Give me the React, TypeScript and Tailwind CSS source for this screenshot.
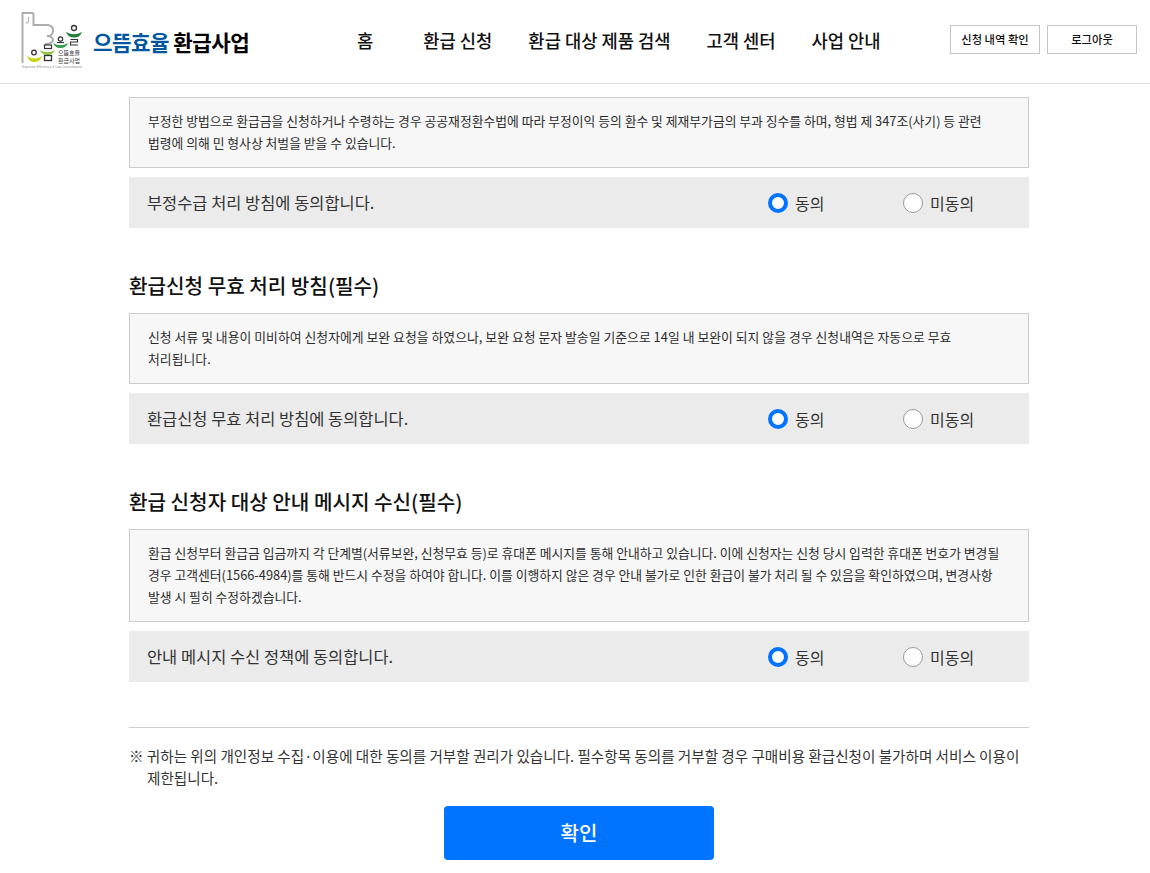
const font = { fontFamily: '"Noto Sans CJK KR", "Noto Sans", sans-serif' };

function Logo() {
  return (
    <svg width="64" height="70" viewBox="0 0 64 70" className="shrink-0">
      <path d="M2.5 57V7H12c1 0 1.5.5 1.5 1.5V19H27q6 0 6 5.5t-6 5.5q6 .5 6 4t-8 4" fill="none" stroke="#adadad" strokeWidth="2" />
      <path d="M8.5 11v4q0 2-3 2" fill="none" stroke="#bdbdbd" strokeWidth="1.2" />
      <path d="M7 50q7.500 5 15 0q-2 6-7.500 6T7 50z" fill="#c9d217" />
      <circle cx="14" cy="46.500" r="2.300" fill="none" stroke="#333" strokeWidth="1.300" />
      <path d="M20 44q7.500 4.500 15 0q-2 5-7.500 5T20 44z" fill="#8cc63f" />
      <rect x="24.500" y="49.500" width="7" height="5" fill="none" stroke="#333" strokeWidth="1.300" />
      <rect x="24.500" y="39" width="7" height="3.500" fill="none" stroke="#333" strokeWidth="1.200" />
      <path d="M33 37q7.500 4.500 15 0q-2 5-7.500 5T33 37z" fill="#2f9e44" />
      <circle cx="40.500" cy="33" r="2.200" fill="none" stroke="#333" strokeWidth="1.200" />
      <path d="M37 36.500h7" stroke="#333" strokeWidth="1.200" />
      <path d="M46 26q8 4.500 16 0q-2 5.500-8 5.500T46 26z" fill="#1d7f3a" />
      <circle cx="54" cy="22" r="2.500" fill="none" stroke="#333" strokeWidth="1.300" />
      <path d="M50.500 33.500h7v2.500h-7v3h7.500" fill="none" stroke="#333" strokeWidth="1.200" />
      <text x="38" y="49" fontSize="6" fill="#333" style={font}>으뜸효율</text>
      <text x="38" y="56.500" fontSize="6" fill="#333" style={font}>환급사업</text>
      <text x="2" y="62" fontSize="3" fill="#888" textLength="60" style={{ fontFamily: '"Liberation Sans", sans-serif' }}>Supreme Efficiency &amp; Low Consumption</text>
    </svg>
  );
}

function Radio({ checked, label }: { checked?: boolean; label: string }) {
  return (
    <div className="flex items-center gap-[7px]">
      {checked ? (
        <span className="w-[20px] h-[20px] rounded-full bg-white border-[4px] border-[#0073ff]" />
      ) : (
        <span className="w-[20px] h-[20px] rounded-full bg-white border border-[#999999]" />
      )}
      <span className="text-[16px] text-[#333333] leading-[24px]">{label}</span>
    </div>
  );
}

function AgreeRow({ label }: { label: string }) {
  return (
    <div className="h-[51px] mt-[9px] bg-[#ebebeb] flex items-center pl-[18px]">
      <span className="flex-1 text-[16.45px] text-[#333333]">{label}</span>
      <div className="w-[135px]"><Radio checked label="동의" /></div>
      <div className="w-[126px]"><Radio label="미동의" /></div>
    </div>
  );
}

function Notice({ lines, wide }: { lines: string[]; wide?: boolean }) {
  return (
    <div className={wide ? "border border-[#cccccc] bg-[#f7f7f7] px-[18px] pt-[12px] pb-[13px] text-[12.82px] tracking-[0.04px] leading-[22px] text-[#2c2c2c]" : "border border-[#cccccc] bg-[#f7f7f7] px-[18px] pt-[12px] pb-[13px] text-[12.82px] leading-[22px] text-[#2c2c2c]"}>
      {lines.map((l) => (
        <div key={l} className="whitespace-nowrap">{l}</div>
      ))}
    </div>
  );
}

export default function App() {
  return (
    <div className="w-[1150px] h-[873px] bg-white overflow-hidden" style={font}>
      <header className="h-[84px] border-b border-[#dddddd] flex items-center relative">
        <div className="ml-[20px] mt-[-1px]"><Logo /></div>
        <div className="ml-[9px] text-[21.2px] font-bold tracking-[-0.5px] whitespace-nowrap">
          <span className="text-[#00569f]">으뜸효율</span>
          <span className="text-black"> 환급사업</span>
        </div>
        <nav className="absolute left-[357px] top-[26px] flex gap-[36px] text-[17.7px] font-medium text-[#111111] leading-[28px]">
          <span className="mr-[14px]">홈</span>
          <span>환급 신청</span>
          <span>환급 대상 제품 검색</span>
          <span>고객 센터</span>
          <span>사업 안내</span>
        </nav>
        <div className="absolute left-[950px] top-[25px] flex gap-[7px] text-[11.3px] font-medium text-[#111111]">
          <div className="w-[90px] h-[29px] border border-[#c4c4c4] flex items-center justify-center">신청 내역 확인</div>
          <div className="w-[90px] h-[29px] border border-[#c4c4c4] flex items-center justify-center">로그아웃</div>
        </div>
      </header>

      <main className="w-[900px] ml-[129px] pt-[13px]">
        <Notice
          lines={[
            "부정한 방법으로 환급금을 신청하거나 수령하는 경우 공공재정환수법에 따라 부정이익 등의 환수 및 제재부가금의 부과 징수를 하며, 형법 제 347조(사기) 등 관련",
            "법령에 의해 민 형사상 처벌을 받을 수 있습니다.",
          ]}
        />
        <AgreeRow label="부정수급 처리 방침에 동의합니다." />

        <h2 className="mt-[42px] mb-[11px] text-[20.15px] font-medium leading-[32px] text-[#111111]">환급신청 무효 처리 방침(필수)</h2>
        <Notice
          wide
          lines={[
            "신청 서류 및 내용이 미비하여 신청자에게 보완 요청을 하였으나, 보완 요청 문자 발송일 기준으로 14일 내 보완이 되지 않을 경우 신청내역은 자동으로 무효",
            "처리됩니다.",
          ]}
        />
        <AgreeRow label="환급신청 무효 처리 방침에 동의합니다." />

        <h2 className="mt-[42px] mb-[11px] text-[20.15px] font-medium leading-[32px] text-[#111111]">환급 신청자 대상 안내 메시지 수신(필수)</h2>
        <Notice
          lines={[
            "환급 신청부터 환급금 입금까지 각 단계별(서류보완, 신청무효 등)로 휴대폰 메시지를 통해 안내하고 있습니다. 이에 신청자는 신청 당시 입력한 휴대폰 번호가 변경될",
            "경우 고객센터(1566-4984)를 통해 반드시 수정을 하여야 합니다. 이를 이행하지 않은 경우 안내 불가로 인한 환급이 불가 처리 될 수 있음을 확인하였으며, 변경사항",
            "발생 시 필히 수정하겠습니다.",
          ]}
        />
        <AgreeRow label="안내 메시지 수신 정책에 동의합니다." />

        <div className="mt-[45px] border-t border-[#cccccc] pt-[17px] pl-[18px] -indent-[18px] text-[14.58px] leading-[22px] text-[#333333]">
          ※ 귀하는 위의 개인정보 수집·이용에 대한 동의를 거부할 권리가 있습니다. 필수항목 동의를 거부할 경우 구매비용 환급신청이 불가하며 서비스 이용이 제한됩니다.
        </div>
        <div className="flex justify-center mt-[17px]">
          <button className="w-[270px] h-[54px] rounded-[4px] bg-[#0073ff] text-white text-[20px] font-medium">확인</button>
        </div>
      </main>
    </div>
  );
}
